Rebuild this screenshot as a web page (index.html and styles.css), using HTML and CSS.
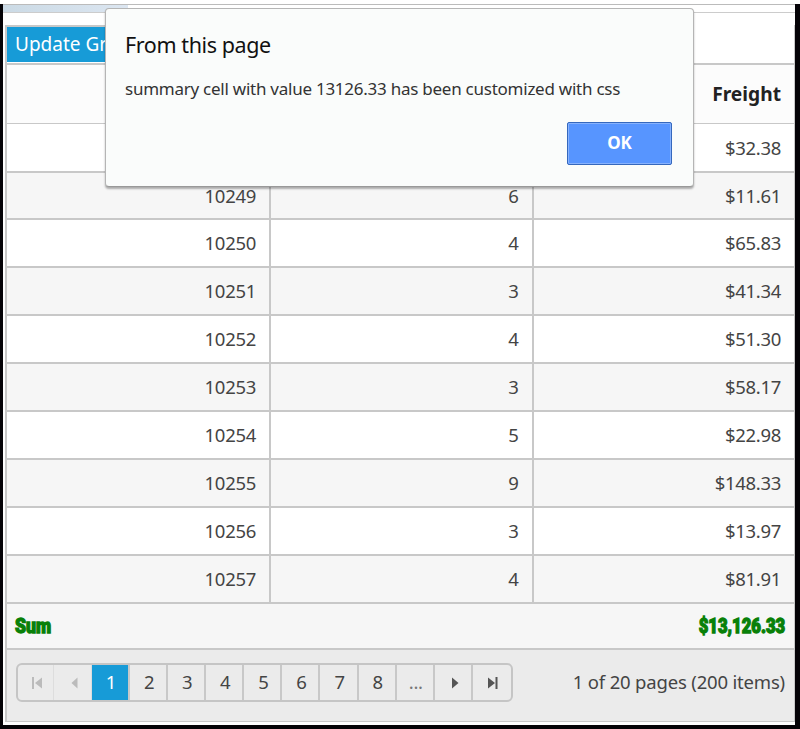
FILE: index.html
```html
<!DOCTYPE html>
<html lang="en">
<head>
<meta charset="utf-8">
<title>Grid summary</title>
<link rel="stylesheet" href="styles.css">
</head>
<body>
<div class="window">
  <div class="strip"><span class="strip-art"></span></div>
  <main class="grid">
    <div class="toolbar"><button class="update">Update Grid</button></div>
    <div class="row head"><span></span><span></span><span>Freight</span></div>
    <div class="row first"><span>10248</span><span>5</span><span>$32.38</span></div>
    <div class="row alt"><span>10249</span><span>6</span><span>$11.61</span></div>
    <div class="row"><span>10250</span><span>4</span><span>$65.83</span></div>
    <div class="row alt"><span>10251</span><span>3</span><span>$41.34</span></div>
    <div class="row"><span>10252</span><span>4</span><span>$51.30</span></div>
    <div class="row alt"><span>10253</span><span>3</span><span>$58.17</span></div>
    <div class="row"><span>10254</span><span>5</span><span>$22.98</span></div>
    <div class="row alt"><span>10255</span><span>9</span><span>$148.33</span></div>
    <div class="row"><span>10256</span><span>3</span><span>$13.97</span></div>
    <div class="row alt"><span>10257</span><span>4</span><span>$81.91</span></div>
    <div class="summary"><span class="sum-label">Sum</span><span class="sum-value">$13,126.33</span></div>
    <div class="pager">
      <nav class="pages">
        <span class="page off"><svg width="12" height="14" viewBox="0 0 12 14"><path d="M1 1h2v12H1zM11 1.500v11L4 7z"/></svg></span>
        <span class="page off"><svg width="12" height="14" viewBox="0 0 12 14"><path d="M9.500 1.500v11L3.500 7z"/></svg></span>
        <span class="page current">1</span>
        <span class="page">2</span>
        <span class="page">3</span>
        <span class="page">4</span>
        <span class="page">5</span>
        <span class="page">6</span>
        <span class="page">7</span>
        <span class="page">8</span>
        <span class="page dots">...</span>
        <span class="page"><svg width="12" height="14" viewBox="0 0 12 14"><path d="M4 1.500v11L10.500 7z"/></svg></span>
        <span class="page"><svg width="12" height="14" viewBox="0 0 12 14"><path d="M1 1.500v11L8 7zM8.500 1h2v12h-2z"/></svg></span>
      </nav>
      <span class="count">1 of 20 pages (200 items)</span>
    </div>
  </main>
</div>
<section class="dialog" role="alertdialog">
  <h1>From this page</h1>
  <p>summary cell with value 13126.33 has been customized with css</p>
  <button class="ok">OK</button>
</section>
</body>
</html>
```
FILE: styles.css
```css
* { box-sizing: border-box; }
body {
  margin: 0;
  width: 800px;
  height: 729px;
  overflow: hidden;
  padding-top: 4px;
  background: #fff;
  font-family: "Noto Sans", "Open Sans", sans-serif;
  font-size: 18.500px;
  letter-spacing: -.3px;
  color: #444;
}
.window {
  height: 721px;
  border: solid #050307;
  border-width: 0 5px 0 3px;
  background: #fff;
  padding-left: 2px;
  box-shadow: 0 4px 0 #050307;
}
.strip {
  height: 9px;
  margin-left: -2px;
  border-top: 1px solid #bbb;
  border-bottom: 1px solid #ccc;
}
.strip-art {
  display: block;
  width: 125px;
  height: 7px;
  background: linear-gradient(90deg, #cbdae5, #dce6f1);
}
.grid {
  margin-top: 12px;
  height: 697px;
  border: solid #c8c8c8;
  border-width: 0 1px 1px 2px;
}
.toolbar {
  height: 38px;
  background: #fff;
}
.update {
  display: block;
  width: 120px;
  height: 37px;
  border: 0;
  border-top: 2px solid #c8c8c8;
  padding: 0 0 0 8px;
  background: #179bd7;
  color: #fff;
  font: 19px/35px "Noto Sans", sans-serif;
  text-align: left;
  white-space: nowrap;
}
.row {
  display: grid;
  grid-template-columns: 264px 262.500px 1fr;
  height: 47.900px;
  line-height: 46px;
  border-top: 2px solid #c8c8c8;
  background: #fff;
}
.row span { padding-right: 13px; text-align: right; }
.row span:not(:last-child) { border-right: 2px solid #c8c8c8; padding-right: 13px; }
.row.alt { background: #f6f6f6; }
.row.head {
  height: 60px;
  line-height: 58px;
  background: #fcfcfc;
  color: #222;
  font-size: 19.200px;
  letter-spacing: 0;
  font-weight: 700;
}
.row.first { border-top-width: 1px; height: 47.500px; line-height: 47px; }
.summary {
  display: flex;
  justify-content: space-between;
  height: 46.400px;
  padding: 0 9px 0 8px;
  border-top: 2px solid #c8c8c8;
  background: #f6f6f6;
  color: #088008;
  font: 900 20px/45px Roboto, sans-serif;
  letter-spacing: 0;
  -webkit-text-stroke: 1.300px #088008;
}
.sum-label { transform: scaleX(.88); transform-origin: left; }
.sum-value { transform: scaleX(.83); transform-origin: right; }
.pager {
  display: flex;
  justify-content: space-between;
  height: 73px;
  padding: 13px 9px 0;
  border-top: 2px solid #c8c8c8;
  background: #ebebeb;
}
.pages {
  display: grid;
  grid-template-columns: 36px 38px 38px repeat(10, 1fr);
  width: 497px;
  height: 39px;
  border: 2px solid #c5c5c5;
  border-radius: 6px;
  line-height: 34px;
  text-align: center;
}
.page { border-right: 2px solid #c8c8c8; padding-left: 2px; }
.page:last-child { border: 0; }
.page svg { vertical-align: -1px; fill: #555; }
.page.off { border-right: 1px solid #ddd; }
.page.off svg { fill: #bbb; }
.page.current { background: #179bd7; color: #fff; }
.page.dots { color: #777; }
.count { line-height: 37px; letter-spacing: -.18px; white-space: nowrap; }
.dialog {
  position: absolute;
  left: 105px;
  top: 8px;
  width: 589px;
  height: 179px;
  padding: 20px 21px 0 19px;
  border: 1px solid #b5b5b5;
  border-bottom-color: #999;
  border-radius: 4px;
  background: #fafcfb;
  box-shadow: 0 2px 2px rgba(0, 0, 0, .3);
  color: #333;
}
h1 { margin: 0; font-size: 21.500px; font-weight: 400; line-height: 32px; letter-spacing: -.4px; color: #111; }
p { margin: 12px 0 0; font-size: 17px; line-height: 31px; letter-spacing: -.25px; white-space: nowrap; }
.ok {
  display: block;
  width: 105px;
  height: 43px;
  margin: 18px 0 0 auto;
  padding: 0 0 2px;
  border: 1px solid #3568bd;
  border-radius: 2px;
  box-shadow: inset 0 0 0 1px #87b2fd;
  background: #5795ff;
  color: #fff;
  font: 700 17px/39px "Noto Sans", sans-serif;
}
```
